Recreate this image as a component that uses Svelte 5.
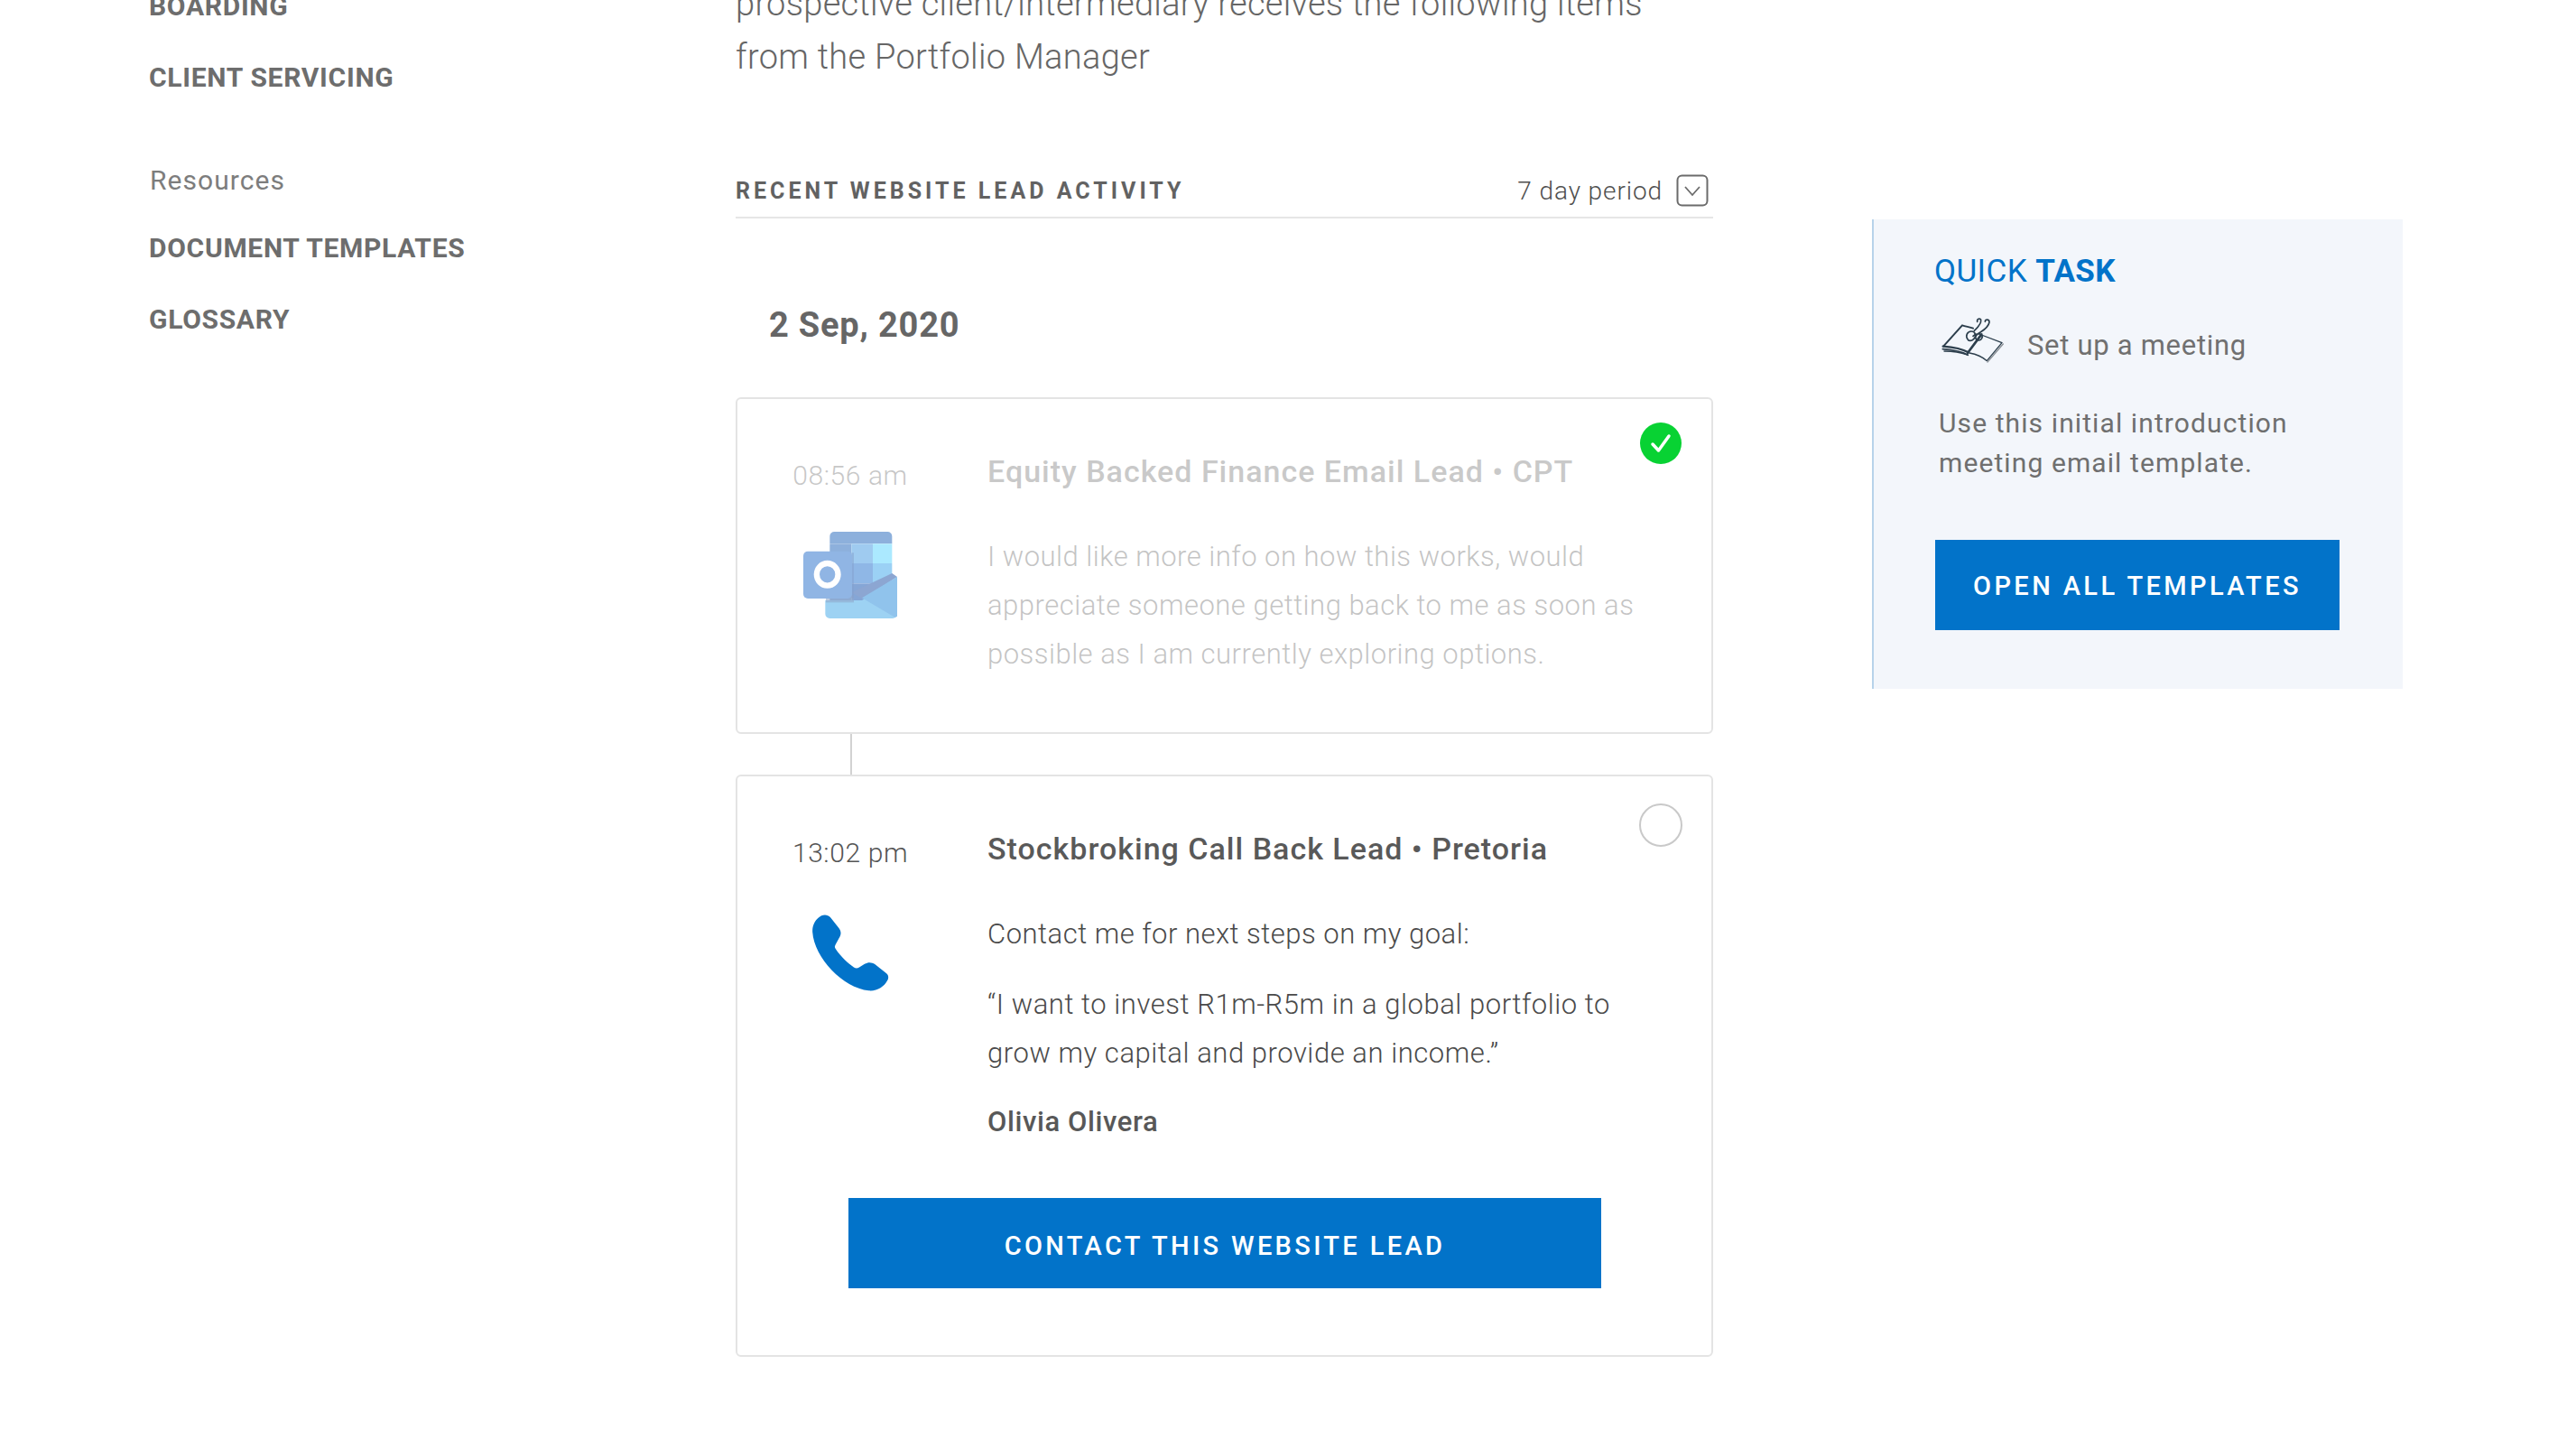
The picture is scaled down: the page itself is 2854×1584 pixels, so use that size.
<script>
  const navTop = ['BOARDING', 'CLIENT SERVICING'];
  const navRes = ['DOCUMENT TEMPLATES', 'GLOSSARY'];
</script>

<div class="page">
  <nav class="sidebar">
    {#each navTop as n}<a class="navlink">{n}</a>{/each}
    <div class="res-title">Resources</div>
    {#each navRes as n}<a class="navlink">{n}</a>{/each}
  </nav>

  <main class="main">
    <p class="intro">prospective client/intermediary receives the following items<br />from the Portfolio Manager</p>

    <div class="activity-head">
      <h2>RECENT WEBSITE LEAD ACTIVITY</h2>
      <div class="period">
        <span>7 day period</span>
        <svg width="36" height="36" viewBox="0 0 36 36" fill="none">
          <rect x="1.500" y="1.500" width="33" height="33" rx="5" stroke="#6b6b6b" stroke-width="2" />
          <path d="M10 14l8 9 8-9" stroke="#6b6b6b" stroke-width="1.800" />
        </svg>
      </div>
    </div>

    <h3 class="date">2 Sep, 2020</h3>

    <article class="card done">
      <div class="when">
        <div class="time faded">08:56 am</div>
        <svg class="outlook" width="104" height="96" viewBox="150 90 312 288">
          <path d="M238 105a15 15 0 0 1 15-15h177a15 15 0 0 1 15 15v25H238z" fill="#8db0dc" />
          <rect x="238" y="130" width="72" height="190" fill="#8db0dc" />
          <rect x="310" y="130" width="71" height="65" fill="#9fcbf0" />
          <rect x="381" y="130" width="64" height="65" fill="#abe9ff" />
          <rect x="310" y="195" width="71" height="67" fill="#8fb7e6" />
          <rect x="381" y="195" width="64" height="67" fill="#9bd1f5" />
          <rect x="310" y="262" width="71" height="60" fill="#85a6d6" />
          <rect x="381" y="262" width="64" height="60" fill="#8fb7e6" />
          <path d="M223 318h122l117-78v123a15 15 0 0 1-15 15H238a15 15 0 0 1-15-15z" fill="#9dd2f3" />
          <path d="M445 228l17 12-117 72-35-20z" fill="#8ca6d2" />
          <path d="M462 240v130a8 8 0 0 1-8 4L345 310z" fill="#90c3ec" />
          <rect x="225" y="300" width="93" height="25" fill="#8fa8cc" opacity=".6" />
          <rect x="310" y="160" width="8" height="150" fill="#84a0cb" opacity=".5" />
          <rect x="150" y="155" width="162" height="157" rx="15" fill="#90b5e4" />
          <ellipse cx="230" cy="232" rx="35.500" ry="37" fill="none" stroke="#fff" stroke-width="19" />
        </svg>
      </div>
      <div class="body faded">
        <h4>Equity Backed Finance Email Lead • CPT</h4>
        <p>I would like more info on how this works, would appreciate someone getting back to me as soon as possible as I am currently exploring options.</p>
      </div>
      <svg class="status" width="46" height="46" viewBox="0 0 46 46">
        <circle cx="23" cy="23" r="23" fill="#08d233" />
        <path d="M14 24l6.500 7L32 15" fill="none" stroke="#fff" stroke-width="3.500" stroke-linecap="round" stroke-linejoin="round" />
      </svg>
    </article>

    <div class="connector"></div>

    <article class="card">
      <div class="when">
        <div class="time">13:02 pm</div>
        <svg class="phone" width="85" height="85" viewBox="120 100 255 256">
          <path fill="#0273c9" d="M150 104C160 100 172 101 180 110L208 145C217 157 216 168 208 180L197 200C193 207 194 211 198 216C214 240 238 262 258 276C264 280 270 280 276 276L294 265C306 258 318 259 328 266L366 296C374 302 375 312 370 320C358 342 336 356 308 354C222 345 126 245 120 158C119 135 130 114 150 104Z" />
        </svg>
      </div>
      <div class="body">
        <h4>Stockbroking Call Back Lead • Pretoria</h4>
        <p>Contact me for next steps on my goal:</p>
        <p class="quote">“I want to invest R1m-R5m in a global portfolio to grow my capital and provide an income.”</p>
        <p class="name">Olivia Olivera</p>
      </div>
      <span class="status empty"></span>
      <button class="btn wide">CONTACT THIS WEBSITE LEAD</button>
    </article>
  </main>

  <aside class="quick">
    <h3><span>QUICK</span> <b>TASK</b></h3>
    <div class="task">
      <svg width="70" height="55" viewBox="60 30 210 165" fill="none" stroke="#2c3e4c" stroke-linecap="round" stroke-linejoin="round">
        <path d="M70 133L132 64c12 4 26 6 36 10" stroke-width="6" />
        <path d="M68 134c26 2 60 6 84 20" stroke-width="7" />
        <path d="M67 143c26 2 60 6 84 20" stroke-width="5" />
        <path d="M72 150c26 0 50 2 76 12" stroke-width="4" />
        <path d="M150 156l46-62" stroke-width="8" />
        <path d="M196 96l68 26-50 60c-16-14-36-22-58-26" stroke-width="4" />
        <path d="M216 186l52-60" stroke="#8a9096" stroke-width="4" />
        <path d="M150 110c-8-10-2-26 12-26 14 0 18 16 8 26-8 8-18 6-20 0zM172 82c10-10 24-22 22-36-2-6-14-4-12 6" stroke-width="5" />
        <path d="M168 100c10-10 22-8 28-4 6 6 0 18-8 18-10 0-16-8-8-18 14-12 38-20 42-42 0-12-14-10-14-2" stroke-width="5" />
      </svg>
      <span>Set up a meeting</span>
    </div>
    <p>Use this initial introduction<br />meeting email template.</p>
    <button class="btn">OPEN ALL TEMPLATES</button>
  </aside>
</div>

<style>
  :global(body) {
    margin: 0;
    background: #fff;
    overflow: hidden;
    height: 1584px;
  }
  .page {
    display: flex;
    align-items: flex-start;
    font-family: Roboto, "Liberation Sans", sans-serif;
    color: #6d6d6d;
    height: 1584px;
    overflow: hidden;
    box-sizing: border-box;
    padding-left: 165px;
  }
  .sidebar {
    width: 650px;
    flex: none;
    display: flex;
    flex-direction: column;
    margin-top: -15px;
  }
  .navlink {
    font-size: 30px;
    font-weight: 700;
    line-height: 44px;
    margin-bottom: 35px;
    letter-spacing: 0.7px;
    color: #6d6d6d;
  }
  .res-title {
    font-size: 30px;
    line-height: 40px;
    letter-spacing: 1.050px;
    color: #7d7d7d;
    margin: 37px 0 33px 1px;
  }
  .main {
    width: 1083px;
    flex: none;
    margin-top: -25px;
  }
  .intro {
    margin: 0;
    font-size: 38px;
    line-height: 59px;
    font-weight: 300;
    color: #666;
    letter-spacing: 0.3px;
  }
  .activity-head {
    display: flex;
    justify-content: space-between;
    align-items: center;
    margin-top: 91px;
    height: 58px;
    border-bottom: 2px solid #e6e6e6;
    padding-right: 5px;
    padding-bottom: 2px;
    box-sizing: border-box;
  }
  .activity-head h2 {
    margin: 0;
    font-size: 25px;
    letter-spacing: 4px;
    font-weight: 700;
    color: #626262;
  }
  .period {
    display: flex;
    align-items: center;
    gap: 15px;
    font-size: 28px;
    font-weight: 300;
    color: #4f4f4f;
    letter-spacing: 0.9px;
  }
  .period svg { display: block; }
  .date {
    margin: 92px 0 54px 37px;
    font-size: 38px;
    line-height: 52px;
    font-weight: 700;
    color: #666;
    letter-spacing: 0.8px;
  }
  .card {
    position: relative;
    border: 2px solid #e4e4e4;
    border-radius: 6px;
    box-sizing: border-box;
    display: grid;
    grid-template-columns: 250px 1fr;
    column-gap: 27px;
    padding: 0 58px 0 0;
  }
  .done { height: 373px; }
  .faded { opacity: 0.32; }
  .when {
    display: flex;
    flex-direction: column;
    align-items: center;
    padding-top: 63px;
  }
  .time {
    font-size: 30px;
    line-height: 44px;
    font-weight: 300;
    letter-spacing: 0.6px;
    color: #555;
  }
  .outlook { margin-top: 40px; }
  .phone { margin-top: 46px; }
  .body { padding-top: 57px; }
  .body h4 {
    margin: 0;
    font-size: 34px;
    line-height: 46px;
    font-weight: 500;
    letter-spacing: 1px;
    color: #595959;
  }
  .body p {
    margin: 45px 0 0;
    font-size: 31px;
    line-height: 54px;
    font-weight: 300;
    letter-spacing: 0.5px;
    color: #4a4a4a;
  }
  .body p.quote { margin-top: 24px; letter-spacing: 0.55px; }
  .body p.name { margin-top: 22px; font-weight: 500; color: #585858; letter-spacing: 0.6px; }
  .status {
    position: absolute;
    top: 26px;
    right: 33px;
  }
  .status.empty {
    top: 30px;
    border: 2px solid #c9c9c9;
    border-radius: 50%;
    width: 44px;
    height: 44px;
    right: 32px;
  }
  .connector {
    width: 2px;
    height: 45px;
    margin-left: 127px;
    background: #d2d2d2;
  }
  .btn {
    display: block;
    border: 0;
    background: #0273c9;
    color: #fff;
    font-family: inherit;
    font-size: 29px;
    font-weight: 500;
    letter-spacing: 3.350px;
    height: 100px;
    padding: 6px 0 0;
    border-radius: 0;
  }
  .wide {
    grid-column: 1 / -1;
    width: 834px;
    margin: 57px 0 74px 123px;
  }
  .quick {
    flex: none;
    width: 588px;
    height: 520px;
    margin-left: 176px;
    margin-top: 243px;
    background: #f3f6fb;
    border-left: 2px solid #b7d3ea;
    box-sizing: border-box;
    padding: 35px 0 0 67px;
  }
  .quick h3 {
    margin: 0;
    font-size: 35px;
    line-height: 46px;
    font-weight: 400;
    color: #0273c9;
    letter-spacing: 0.4px;
  }
  .quick h3 b { font-weight: 700; }
  .task {
    display: flex;
    align-items: center;
    gap: 26px;
    margin: 25px 0 0 7px;
    height: 55px;
    font-size: 31px;
    font-weight: 400;
    letter-spacing: 0.7px;
    color: #707070;
  }
  .task span { margin-top: 12px; }
  .quick p {
    margin: 43px 0 0 5px;
    font-size: 30px;
    line-height: 44px;
    letter-spacing: 1.100px;
    color: #6f6f6f;
  }
  .quick .btn { width: 448px; margin-top: 63px; margin-left: 1px; letter-spacing: 3.400px; padding-top: 2px; }
</style>
